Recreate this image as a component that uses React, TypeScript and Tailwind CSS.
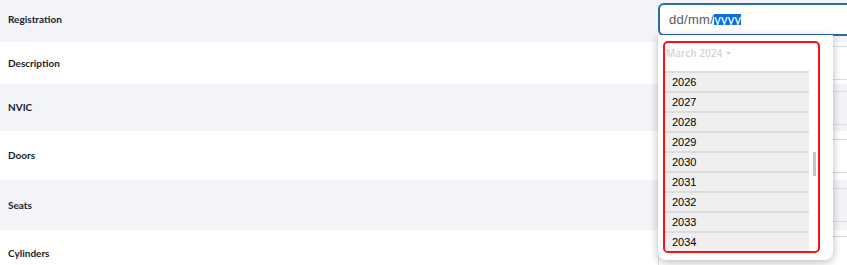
import React from "react";

const rows: { label: string; h: string; bg: string }[] = [
  { label: "Registration", h: "h-[45px]", bg: "bg-[#f3f4f8]" },
  { label: "Description", h: "h-[42px]", bg: "bg-white" },
  { label: "NVIC", h: "h-[47px]", bg: "bg-[#f3f4f8]" },
  { label: "Doors", h: "h-[49px]", bg: "bg-white" },
  { label: "Seats", h: "h-[50px]", bg: "bg-[#f3f4f8]" },
  { label: "Cylinders", h: "h-[46px]", bg: "bg-white" },
];

const years = [2026, 2027, 2028, 2029, 2030, 2031, 2032, 2033, 2034];

export default function App() {
  return (
    <div className="relative w-[847px] h-[265px] overflow-hidden bg-white font-['Lato',sans-serif]">
      <div className="-mt-[3px]">
        {rows.map((r, i) => (
          <div key={r.label} className={`grid grid-cols-[658px_1fr] items-center ${r.h} ${r.bg}`}>
            <div className="pl-2 text-[10px] font-bold text-[#1b1d28] font-['Lato',sans-serif]">{r.label}</div>
            {i === 0 ? (
              <div className="w-[200px] h-[33px] rounded-md border-2 border-[#2a6ca6] bg-white flex items-center pl-[9px] font-['Liberation_Sans',sans-serif] text-[13px] tracking-[0.3px] text-[#5a5a5a]">
                <span>dd/mm/</span>
                <span className="bg-[#0a6fd8] text-white leading-[11px] h-[11px] flex items-center">yyyy</span>
              </div>
            ) : (
              <div className="w-[200px] h-[34px] rounded-md border border-[#d9dce2]" />
            )}
          </div>
        ))}
      </div>

      <div className="absolute left-[658px] top-[35px] w-[175px] h-[225px] bg-white rounded-b-lg shadow-[0_2px_8px_rgba(0,0,0,0.28)] pt-[6px] pl-[5px]">
        <div className="relative w-[157px] h-[212px] rounded-[5px] border-2 border-[#ff1010] overflow-hidden">
          <div className="h-[28px] pt-[4px] pl-[1px] flex items-start">
            <span className="text-[10px] leading-[12px] font-semibold text-[#d2d2d2] font-['Open_Sans',sans-serif]">March 2024</span>
            <svg width="7" height="12" viewBox="0 0 7 12" className="ml-[3px]">
              <path d="M1 5 L6 5 L3.5 8 Z" fill="#d2d2d2" />
            </svg>
          </div>
          <div className="w-[144px]">
            {years.map((y) => (
              <div key={y} className="h-[20px] border-t-2 border-[#dcdcdc] bg-[#efefef] flex items-center pl-[7px] font-['Liberation_Sans',sans-serif] text-[11px] text-black">
                {y}
              </div>
            ))}
          </div>
          <div className="absolute left-[148px] top-[109px] w-[3px] h-[24px] bg-[#c6c6c6]" />
        </div>
      </div>
    </div>
  );
}
